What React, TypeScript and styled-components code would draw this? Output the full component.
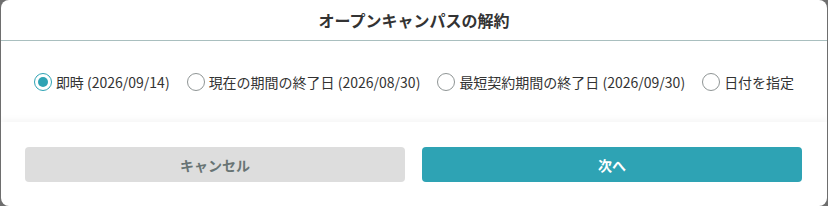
import React, { useState } from "react";
import styled, { createGlobalStyle } from "styled-components";

const Global = createGlobalStyle`
  html, body { margin: 0; padding: 0; }
  body {
    background: #6e6e6e;
    font-family: "Noto Sans CJK JP", "Noto Sans", sans-serif;
    color: #333;
  }
`;

const Modal = styled.div`
  width: 826px;
  height: 206px;
  margin-left: 1px;
  background: #fff;
  border-radius: 8px;
  display: flex;
  flex-direction: column;
  overflow: hidden;
`;

const Header = styled.div`
  height: 40px;
  border-bottom: 1px solid #a9bfbf;
  display: flex;
  align-items: center;
  justify-content: center;
  font-size: 16px;
  font-weight: 700;
  color: #333;
`;

const Body = styled.div`
  height: 81px;
  display: flex;
  align-items: center;
  justify-content: center;
  gap: 17px;
`;

const Option = styled.label`
  display: flex;
  align-items: center;
  gap: 4px;
  font-size: 14px;
  color: #333;
  cursor: pointer;
  white-space: nowrap;
`;

const Circle = styled.span<{ $checked: boolean }>`
  box-sizing: border-box;
  width: 18px;
  height: 18px;
  border-radius: 50%;
  border: 1px solid ${(p) => (p.$checked ? "#2ea3b4" : "#8f9595")};
  display: flex;
  align-items: center;
  justify-content: center;
  &::after {
    content: "";
    width: 10px;
    height: 10px;
    border-radius: 50%;
    background: ${(p) => (p.$checked ? "#2ea3b4" : "transparent")};
  }
`;

const Footer = styled.div`
  flex: 1;
  display: flex;
  align-items: flex-start;
  gap: 17px;
  padding: 25px 25px 0 24px;
  box-shadow: 0 -3px 6px rgba(0, 0, 0, 0.035);
  position: relative;
`;

const Button = styled.button<{ $primary?: boolean }>`
  flex: 1;
  height: 35px;
  border: none;
  border-radius: 4px;
  font-family: inherit;
  font-size: 14px;
  font-weight: 700;
  background: ${(p) => (p.$primary ? "#2ea3b4" : "#dddddd")};
  color: ${(p) => (p.$primary ? "#ffffff" : "#687474")};
  cursor: pointer;
`;

const options = [
  "即時 (2026/09/14)",
  "現在の期間の終了日 (2026/08/30)",
  "最短契約期間の終了日 (2026/09/30)",
  "日付を指定",
];

export default function App() {
  const [sel, setSel] = useState(0);
  return (
    <>
      <Global />
      <Modal>
        <Header>オープンキャンパスの解約</Header>
        <Body>
          {options.map((o, i) => (
            <Option key={o} onClick={() => setSel(i)}>
              <Circle $checked={sel === i} />
              {o}
            </Option>
          ))}
        </Body>
        <Footer>
          <Button>キャンセル</Button>
          <Button $primary>次へ</Button>
        </Footer>
      </Modal>
    </>
  );
}
